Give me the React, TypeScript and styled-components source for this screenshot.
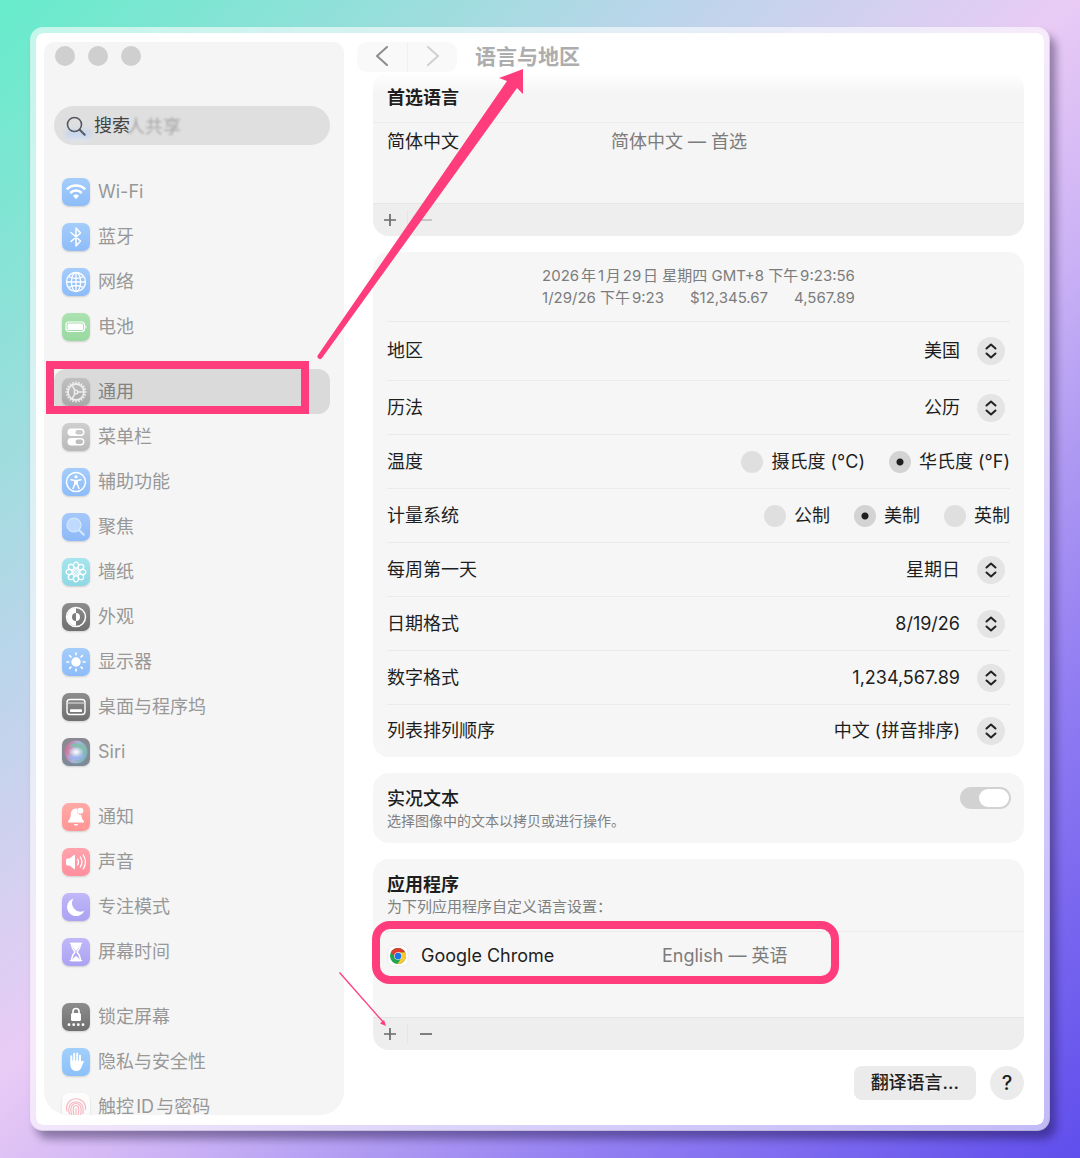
import React, { useState } from "react";
import styled, { createGlobalStyle, css } from "styled-components";
import { Fingerprint } from "lucide-react";

const PINK = "#ff3d7c";

const GlobalStyle = createGlobalStyle`
  *, *::before, *::after { box-sizing: border-box; }
  body {
    margin: 0;
    font-family: Inter, "Noto Sans CJK SC", sans-serif;
    font-size: 18px;
    line-height: 24px;
    color: #1e1e1e;
    text-autospace: normal;
  }
  button, input, select { font: inherit; color: inherit; margin: 0; }
  ul { list-style: none; margin: 0; padding: 0; }
  h1, h2, p { margin: 0; }
`;

/* ---------- window ---------- */

const Backdrop = styled.div`
  display: flex;
  min-height: 100vh;
  padding: 27px 30px;
  background: linear-gradient(
    135deg,
    #66eccb 0%,
    #92e0d9 16%,
    #b8d6e9 29%,
    #e9cbf5 48%,
    #c9b0f5 60%,
    #af9af2 68%,
    #937ff2 78%,
    #7b68ef 88%,
    #5f4eec 100%
  );
`;

const Window = styled.div`
  position: relative;
  display: flex;
  flex: 1;
  min-width: 0;
  padding: 9px 0 0 8px;
  border: 6px solid rgba(255, 255, 255, 0.6);
  border-radius: 13px;
  background: #fff;
  background-clip: padding-box;
  box-shadow: 6px 8px 9px rgba(20, 10, 50, 0.4);
`;

const ArrowLayer = styled.svg`
  position: absolute;
  top: 0;
  left: 0;
  width: 100%;
  height: 100%;
  pointer-events: none;
`;

const Highlight = styled.span<{ $round?: boolean }>`
  position: absolute;
  inset: ${(p) => (p.$round ? "-11px 185px 33px -1px" : "-8px 21px 0 -8px")};
  border: 8px solid ${PINK};
  border-radius: ${(p) => (p.$round ? "18px" : "0")};
  pointer-events: none;
`;

/* ---------- sidebar ---------- */

const Sidebar = styled.aside`
  contain: size;
  flex: none;
  width: 300px;
  margin-bottom: 10px;
  padding: 4px 14px 0 10px;
  border-radius: 10px 10px 24px 24px;
  background: #f5f5f5;
  overflow: hidden;
`;

const Lights = styled.div`
  display: flex;
  gap: 13px;
  padding-left: 1px;
`;

const Light = styled.button`
  width: 20px;
  height: 20px;
  padding: 0;
  border: 0;
  border-radius: 50%;
  background: #cfcfcf;
`;

const Search = styled.label`
  position: relative;
  display: flex;
  align-items: center;
  gap: 8px;
  height: 39px;
  margin: 40px 0 24px;
  padding: 0 12px;
  border-radius: 20px;
  background: #dfdfdf;
  svg { position: relative; flex: none; }
`;

const SearchInput = styled.input`
  position: relative;
  flex: 1;
  min-width: 0;
  padding: 0;
  border: 0;
  outline: 0;
  background: none;
  appearance: none;
  &::placeholder { color: #444; opacity: 1; }
`;

const Ghost = styled.span`
  position: absolute;
  top: 9px;
  left: 73px;
  color: #8e8e8e;
  filter: blur(1px);
  opacity: 0.7;
`;

const GhostIcon = styled.span`
  position: absolute;
  top: 10px;
  left: 12px;
  width: 25px;
  height: 26px;
  border-radius: 7px;
  background: linear-gradient(#dfdfdf 40%, #c3d3ee 70%, #e9e9e9);
  filter: blur(2px);
`;

const Groups = styled.nav`
  display: flex;
  flex-direction: column;
  gap: 20px;
`;

const Item = styled.a<{ $selected?: boolean }>`
  position: relative;
  display: flex;
  align-items: center;
  gap: 8px;
  height: 45px;
  padding-left: 8px;
  border-radius: 12px;
  color: #989898;
  text-decoration: none;
  ${(p) =>
    p.$selected &&
    css`
      background: #dadada;
      color: #828282;
    `}
`;

const Tile = styled.svg<{ $from: string; $to: string }>`
  flex: none;
  width: 28px;
  height: 28px;
  border-radius: 7px;
  background: linear-gradient(${(p) => p.$from}, ${(p) => p.$to});
  box-shadow: 0 1px 2px rgba(0, 0, 0, 0.16);
  fill: none;
  stroke: none;
`;

/* ---------- main pane ---------- */

const Pane = styled.main`
  flex: 1;
  min-width: 0;
  padding-bottom: 25px;
`;

const Toolbar = styled.header`
  display: flex;
  align-items: center;
  gap: 18px;
  height: 30px;
  padding-left: 13px;
`;

const NavPill = styled.div`
  display: flex;
  height: 30px;
  border-radius: 10px;
  background: #f9f9f9;
`;

const NavButton = styled.button`
  display: grid;
  place-items: center;
  width: 50px;
  padding: 0 0 2px;
  border: 0;
  background: none;
  color: #8d8d8d;
  & + & { border-left: 1px solid #f1f1f1; }
  &:disabled { color: #d0d0d0; }
`;

const Title = styled.h1`
  font-size: 21px;
  line-height: 30px;
  font-weight: 600;
  color: #adadad;
`;

const Sections = styled.div`
  display: flex;
  flex-direction: column;
  gap: 16px;
  padding: 0 20px 0 29px;
`;

const Card = styled.section<{ $fade?: boolean }>`
  border-radius: 16px;
  background: ${(p) => (p.$fade ? "linear-gradient(#fff, #f5f5f5 22px)" : "#f6f6f6")};
`;

const CardHead = styled.div<{ $tall?: boolean }>`
  height: ${(p) => (p.$tall ? "73px" : "51px")};
  padding: 14px 14px 0;
  border-bottom: 1px solid #ececec;
`;

const Heading = styled.h2<{ $bold?: boolean }>`
  font-size: 18px;
  line-height: 24px;
  font-weight: ${(p) => (p.$bold ? 600 : 500)};
`;

const Note = styled.p<{ $large?: boolean }>`
  font-size: ${(p) => (p.$large ? 15 : 14)}px;
  line-height: 20px;
  color: #808080;
`;

const LangList = styled.ul<{ $height: number }>`
  height: ${(p) => p.$height}px;
`;

const LangRow = styled.li<{ $name: number; $top: number }>`
  position: relative;
  display: grid;
  grid-template-columns: ${(p) => p.$name}px 1fr;
  align-content: start;
  align-items: center;
  height: 100%;
  padding: ${(p) => p.$top}px 14px 0;
`;

const LangName = styled.span`
  display: flex;
  align-items: center;
  gap: 12px;
`;

const LangValue = styled.span`
  color: #7c7c7c;
`;

const CardFoot = styled.div`
  display: flex;
  align-items: center;
  height: 33px;
  border-top: 1px solid #e5e5e5;
  border-radius: 0 0 16px 16px;
  background: #eee;
`;

const FootButton = styled.button`
  display: grid;
  place-items: center;
  width: 34px;
  height: 20px;
  padding: 0;
  border: 0;
  background: none;
  color: #6a6a6a;
  & + & { width: 36px; border-left: 1px solid #e6e6e6; }
  &:disabled { color: #bdbdbd; }
`;

const Preview = styled.div`
  display: grid;
  justify-content: center;
  align-content: center;
  height: 70px;
  margin: 0 14px;
  border-bottom: 1px solid #ebebeb;
  font-size: 15px;
  line-height: 22px;
  color: #7c7c7c;
`;

const PreviewLine = styled.div`
  display: flex;
  justify-content: space-between;
`;

const Row = styled.div<{ $first?: boolean }>`
  display: flex;
  align-items: center;
  justify-content: space-between;
  height: ${(p) => (p.$first ? 59 : 54)}px;
  margin: 0 14px;
  border-bottom: 1px solid #ebebeb;
  &:last-child { height: 52px; border-bottom: 0; }
`;

const Picker = styled.span`
  display: flex;
  align-items: center;
  gap: 17px;
  padding-right: 5px;
`;

const Select = styled.select`
  padding: 0;
  border: 0;
  outline: 0;
  background: none;
  appearance: none;
  text-align-last: right;
`;

const Chevrons = styled.svg`
  width: 28px;
  height: 28px;
  border-radius: 50%;
  background: #e4e4e4;
  fill: none;
  stroke: #222;
  stroke-width: 2;
  stroke-linecap: round;
  stroke-linejoin: round;
`;

const Radios = styled.div`
  display: flex;
  gap: 24px;
`;

const RadioLabel = styled.label`
  display: flex;
  align-items: center;
  gap: 8px;
`;

const Radio = styled.input`
  appearance: none;
  width: 22px;
  height: 22px;
  border-radius: 50%;
  background: #dfdfdf;
  &:checked { background: radial-gradient(circle, #1e1e1e 3px, #d3d3d3 4px); }
`;

const SwitchRow = styled.label`
  display: flex;
  align-items: flex-start;
  justify-content: space-between;
  height: 70px;
  padding: 14px 13px 0 14px;
`;

const Switch = styled.input`
  appearance: none;
  width: 51px;
  height: 22px;
  border-radius: 11px;
  background: #d2d2d2;
  &::before {
    content: "";
    display: block;
    width: 30px;
    height: 18px;
    margin: 2px;
    border-radius: 9px;
    background: #fff;
  }
  &:checked::before { margin-left: 19px; }
`;

const Actions = styled.div`
  display: flex;
  justify-content: flex-end;
  gap: 14px;
`;

const ActionButton = styled.button<{ $circle?: boolean }>`
  height: 34px;
  width: ${(p) => (p.$circle ? "34px" : "auto")};
  padding: ${(p) => (p.$circle ? "0" : "0 17px")};
  border: 0;
  border-radius: ${(p) => (p.$circle ? "50%" : "8px")};
  background: #ebebeb;
  font-weight: 500;
  ${(p) => p.$circle && css`font-size: 20px;`}
`;

/* ---------- icons ---------- */

const BLUE = ["#a5cdfb", "#8dbcf8"];
const GREY = ["#cfcfcf", "#b9b9b9"];
const DARK = ["#8d8d8d", "#6f6f6f"];
const RED = ["#ffaaa6", "#ff9594"];
const VIOLET = ["#c0b8f8", "#aba2f2"];
const angles = (n: number) => Array.from({ length: n }, (_, i) => (i * 360) / n);

type Entry = { name: string; tone: string[]; art: React.ReactNode };

const groups: Entry[][] = [
  [
    {
      name: "Wi-Fi",
      tone: BLUE,
      art: (
        <g stroke="#fff" strokeWidth="2.5">
          <path d="M4.800 11.400a13 13 0 0 1 18.400 0M8.300 15a8 8 0 0 1 11.400 0" />
          <path d="M14 21.200l-3-3.400a4.200 4.200 0 0 1 6 0z" fill="#fff" stroke="none" />
        </g>
      ),
    },
    {
      name: "蓝牙",
      tone: BLUE,
      art: <path d="M9 9.500l9.500 8.500-4.500 5v-18l4.500 5L9 18.500" stroke="#fff" strokeWidth="1.5" strokeLinejoin="round" strokeLinecap="round" />,
    },
    {
      name: "网络",
      tone: BLUE,
      art: (
        <g stroke="#fff" strokeWidth="1.3">
          <circle cx="14" cy="14" r="9.5" />
          <ellipse cx="14" cy="14" rx="4.600" ry="9.5" />
          <path d="M14 4.500v19M4.500 14h19M6.500 8.500q7.500 4 15 0M6.500 19.500q7.500-4 15 0" />
        </g>
      ),
    },
    {
      name: "电池",
      tone: ["#abe2b1", "#99d9a0"],
      art: (
        <g>
          <rect x="4" y="9" width="18.500" height="9.5" rx="3" stroke="#fff" strokeWidth="1.2" />
          <rect x="5.500" y="10.500" width="15.500" height="6.500" rx="1.5" fill="#fff" />
          <path d="M23.500 12q2 1.800 0 3.500z" fill="#fff" />
        </g>
      ),
    },
  ],
  [
    {
      name: "通用",
      tone: ["#c0c0c0", "#a8a8a8"],
      art: (
        <g stroke="#ededed" strokeWidth="1.5">
          <circle cx="14" cy="14" r="8" strokeWidth="1.8" />
          {angles(20).map((a) => (
            <path key={a} d="M14 5.500V3.500" transform={`rotate(${a} 14 14)`} />
          ))}
          {angles(3).map((a) => (
            <path key={a} d="M16 14h6" transform={`rotate(${a} 14 14)`} />
          ))}
          <circle cx="14" cy="14" r="1.8" />
        </g>
      ),
    },
    {
      name: "菜单栏",
      tone: GREY,
      art: (
        <g fill="#fff">
          <rect x="5.5" y="5.5" width="17" height="7.5" rx="3.7" />
          <rect x="5.5" y="15" width="17" height="7.5" rx="3.7" />
          <rect x="13.5" y="7" width="7.5" height="4.5" rx="2.2" fill="#c8c8c8" />
          <rect x="13.5" y="16.5" width="7.5" height="4.5" rx="2.2" fill="#bdbdbd" />
        </g>
      ),
    },
    {
      name: "辅助功能",
      tone: BLUE,
      art: (
        <g stroke="#fff" strokeWidth="1.5" strokeLinecap="round">
          <circle cx="14" cy="14" r="9.5" />
          <circle cx="14" cy="8.8" r="1.6" fill="#fff" stroke="none" />
          <path d="M9 11.700l3.800.8h2.400l3.800-.8M12.900 12.800v3.200l-1.900 4.500M15.100 12.800v3.200l1.900 4.500" />
          <path d="M12.300 12.400h3.400v4h-3.400z" fill="#fff" stroke="none" />
        </g>
      ),
    },
    {
      name: "聚焦",
      tone: ["#a5c8fb", "#8db9f8"],
      art: (
        <g stroke="#d7e8fe" strokeLinecap="round">
          <circle cx="12" cy="12" r="7" fill="#bfdafd" strokeWidth="1.2" />
          <path d="M17.300 17.300l4.500 4.500" strokeWidth="2" />
        </g>
      ),
    },
    {
      name: "墙纸",
      tone: ["#a6e5ee", "#8fd8e3"],
      art: (
        <g stroke="#fff" strokeWidth="1.3">
          {angles(8).map((a) => (
            <g key={a} transform={`rotate(${a} 14 14)`}>
              <ellipse cx="14" cy="7.2" rx="2.6" ry="3" />
              <path d="M14 14l-1-4h2z" fill="#fff" stroke="none" />
            </g>
          ))}
        </g>
      ),
    },
    {
      name: "外观",
      tone: DARK,
      art: (
        <g>
          <circle cx="14" cy="14" r="9.5" stroke="#fff" strokeWidth="1.5" />
          <path d="M14 5a9 9 0 0 0 0 18v-5a4 4 0 0 1 0-8z" fill="#fff" />
          <path d="M14 10a4 4 0 0 1 0 8z" fill="#fff" />
        </g>
      ),
    },
    {
      name: "显示器",
      tone: BLUE,
      art: (
        <g stroke="#fff" strokeWidth="1.6" strokeLinecap="round">
          <circle cx="14" cy="14" r="4.7" fill="#fff" stroke="none" />
          {angles(8).map((a) => (
            <path key={a} d="M14 6.800V5" transform={`rotate(${a} 14 14)`} />
          ))}
        </g>
      ),
    },
    {
      name: "桌面与程序坞",
      tone: DARK,
      art: (
        <g>
          <rect x="5" y="6.5" width="18" height="15" rx="3" stroke="#fff" strokeWidth="1.4" />
          <path d="M6 10h16" stroke="#fff" strokeWidth=".8" />
          <rect x="8" y="16.3" width="12" height="2.7" rx=".8" fill="#fff" />
        </g>
      ),
    },
    {
      name: "Siri",
      tone: ["#8a8a90", "#7d8a98"],
      art: (
        <g>
          <defs>
            <linearGradient id="siri" x1="0" y1=".3" x2="1" y2=".6">
              <stop offset="0" stopColor="#d4688f" />
              <stop offset=".5" stopColor="#a9b4dc" />
              <stop offset="1" stopColor="#74b5ae" />
            </linearGradient>
            <radialGradient id="siriGlow">
              <stop offset="0" stopColor="#fff" />
              <stop offset="1" stopColor="#fff" stopOpacity="0" />
            </radialGradient>
          </defs>
          <circle cx="14" cy="14" r="11.5" fill="url(#siri)" />
          <path d="M7 8a10 10 0 0 1 17 7q-6-5-17-7z" fill="#7fc0a8" opacity=".8" />
          <path d="M5 17q9 2 18-1a10 10 0 0 1-18 1z" fill="#9db4f3" opacity=".8" />
          <ellipse cx="14" cy="14" rx="8" ry="5.5" fill="url(#siriGlow)" />
        </g>
      ),
    },
  ],
  [
    {
      name: "通知",
      tone: RED,
      art: (
        <g fill="#fff">
          <path d="M14 5.500c-3.500 0-5 2.500-5.200 5.500-.2 4-1 5-2.800 7.300-.3.600 0 1.200.7 1.200h14.600c.7 0 1-.6.700-1.200-1.500-2-2.400-3-2.700-6.300a4.200 4.200 0 0 1-3.700-6.200z" />
          <path d="M11.800 21h4.400a2.300 2.300 0 0 1-4.400 0z" />
          <circle cx="18.3" cy="7.7" r="3" />
        </g>
      ),
    },
    {
      name: "声音",
      tone: ["#ffa3ad", "#ff8f9d"],
      art: (
        <g>
          <path d="M4 12q0-1.500 1.500-1.500h2L12 7q1-.6 1 .6v12.800q0 1.200-1 .6l-4.500-3.500h-2Q4 17.500 4 16z" fill="#fff" />
          <path d="M15.500 11q2 3 0 6M18.300 9q3.300 5 0 10M21.200 7q4.500 7 0 14" stroke="#fff" strokeWidth="1.3" strokeLinecap="round" />
        </g>
      ),
    },
    {
      name: "专注模式",
      tone: VIOLET,
      art: <path d="M11.500 5.500a9 9 0 1 0 10.800 12.300A8.500 8.500 0 0 1 11.500 5.500z" fill="#fff" />,
    },
    {
      name: "屏幕时间",
      tone: VIOLET,
      art: (
        <g stroke="#fff" strokeWidth="1.3" strokeLinejoin="round">
          <path d="M8.500 5.500h11M8.500 22.500h11" strokeWidth="1.6" strokeLinecap="round" />
          <path d="M9.500 5.500h9q0 4.500-3.500 8.500 3.500 4 3.500 8.500h-9q0-4.500 3.500-8.500-3.500-4-3.500-8.500z" />
          <path d="M10 6h8q0 3-4 7-4-4-4-7zM10.500 22q.5-2.500 3.500-4 3 1.500 3.500 4z" fill="#fff" stroke="none" />
        </g>
      ),
    },
  ],
  [
    {
      name: "锁定屏幕",
      tone: DARK,
      art: (
        <g fill="#fff">
          <rect x="9" y="10" width="10" height="8" rx="1.5" />
          <path d="M11 11V8.500a3 3 0 0 1 6 0V11" fill="none" stroke="#fff" strokeWidth="1.7" />
          {[7, 11.7, 16.3, 21].map((x) => (
            <circle key={x} cx={x} cy="21.7" r="1.4" />
          ))}
        </g>
      ),
    },
    {
      name: "隐私与安全性",
      tone: ["#a2d0fb", "#8bc0f9"],
      art: (
        <g stroke="#fff" strokeWidth="2" strokeLinecap="round">
          <path d="M9.300 14V8.300M12.200 13V5.800M15.200 13V5.500M18 14V7.800M18.500 18l2.300-4.300" />
          <path d="M8.300 12.500h10.700l1.500 2.500c-.5 4.500-2.200 8-6.200 8s-6-3-6-7z" fill="#fff" stroke="none" />
        </g>
      ),
    },
    {
      name: "触控ID与密码",
      tone: ["#fdfdfd", "#f9f9f9"],
      art: (
        <g stroke="#f7b3bf" strokeWidth="1.1" strokeLinecap="round">
          <path d="M5 18a9.500 9.500 0 1 1 18.500-1.500M7.500 21a11 11 0 0 1-.5-6.500 7.200 7.200 0 0 1 14 0v6" />
          <path d="M10 22.500a14 14 0 0 1-1-7 5 5 0 0 1 10 0 20 20 0 0 1-.5 7M12.500 23.500a18 18 0 0 1-1.200-8 2.700 2.700 0 0 1 5.400 0q0 4-.7 8.200M14 15.500v8.500" />
        </g>
      ),
    },
  ],
];

const Chrome = () => (
  <svg width="22" height="22" viewBox="0 0 22 22" aria-hidden="true">
    <rect x="1" y="1" width="20" height="20" rx="5" fill="#fff" stroke="#e2e2e2" strokeWidth=".6" />
    <g transform="translate(1.400 1.400) scale(.8)">
      <circle cx="12" cy="12" r="10" fill="#22a455" />
      <path d="M12 7.300h8.900A10 10 0 0 1 11.500 22L16 14.400 12 12z" fill="#fcc934" />
      <path d="M20.900 7.300A10 10 0 0 0 3.400 6.900L8 14.400 12 12V7.300z" fill="#e23b2e" />
      <circle cx="12" cy="12" r="4.8" fill="#fff" />
      <circle cx="12" cy="12" r="4.2" fill="#1f73e8" />
    </g>
  </svg>
);

const Plus = () => (
  <svg width="14" height="14" viewBox="0 0 14 14" stroke="currentColor" strokeWidth="1.7" aria-hidden="true">
    <path d="M1 7h12M7 1v12" />
  </svg>
);

const Minus = () => (
  <svg width="14" height="14" viewBox="0 0 14 14" stroke="currentColor" strokeWidth="1.7" aria-hidden="true">
    <path d="M1 7h12" />
  </svg>
);

/* ---------- composed parts ---------- */

const PickerRow = ({ id, label, value, first }: { id: string; label: string; value: string; first?: boolean }) => (
  <Row $first={first}>
    <label htmlFor={id}>{label}</label>
    <Picker>
      <Select id={id} defaultValue={value}>
        <option>{value}</option>
      </Select>
      <Chevrons viewBox="0 0 28 28" aria-hidden="true">
        <path d="M9.500 11.500L14 7.500l4.500 4M9.500 16.500l4.500 4 4.500-4" />
      </Chevrons>
    </Picker>
  </Row>
);

const RadioRow = ({ name, label, options, initial }: { name: string; label: string; options: string[]; initial: string }) => {
  const [value, setValue] = useState(initial);
  return (
    <Row>
      <span id={name}>{label}</span>
      <Radios role="radiogroup" aria-labelledby={name}>
        {options.map((o) => (
          <RadioLabel key={o}>
            <Radio type="radio" name={name} checked={value === o} onChange={() => setValue(o)} />
            {o}
          </RadioLabel>
        ))}
      </Radios>
    </Row>
  );
};

const FootBar = ({ canRemove }: { canRemove: boolean }) => (
  <CardFoot>
    <FootButton aria-label="添加"><Plus /></FootButton>
    <FootButton aria-label="移除" disabled={!canRemove}><Minus /></FootButton>
  </CardFoot>
);

export default function App() {
  return (
    <>
      <GlobalStyle />
      <Backdrop>
        <Window>
          <Sidebar>
            <Lights>
              <Light aria-label="关闭" />
              <Light aria-label="最小化" />
              <Light aria-label="缩放" />
            </Lights>
            <Search>
              <GhostIcon />
              <Ghost aria-hidden="true">人共享</Ghost>
              <svg width="20" height="20" viewBox="0 0 20 20" fill="none" stroke="#54585f" strokeWidth="1.6" strokeLinecap="round" aria-hidden="true">
                <circle cx="8.5" cy="8.5" r="7" />
                <path d="M13.700 13.700l5 5" strokeWidth="2" />
              </svg>
              <SearchInput type="search" placeholder="搜索" aria-label="搜索" />
            </Search>
            <Groups>
              {groups.map((group, i) => (
                <ul key={i}>
                  {group.map(({ name, tone, art }) => (
                    <li key={name}>
                      <Item href="#" $selected={name === "通用"}>
                        <Tile viewBox="0 0 28 28" $from={tone[0]} $to={tone[1]} aria-hidden="true">
                          {art}
                        </Tile>
                        {name}
                        {name === "通用" && <Highlight />}
                      </Item>
                    </li>
                  ))}
                </ul>
              ))}
            </Groups>
          </Sidebar>

          <Pane>
            <Toolbar>
              <NavPill>
                <NavButton aria-label="后退">
                  <svg width="12" height="20" viewBox="0 0 12 20" fill="none" stroke="currentColor" strokeWidth="2" strokeLinecap="round" strokeLinejoin="round">
                    <path d="M11 1L1 10l10 9" />
                  </svg>
                </NavButton>
                <NavButton aria-label="前进" disabled>
                  <svg width="12" height="20" viewBox="0 0 12 20" fill="none" stroke="currentColor" strokeWidth="2" strokeLinecap="round" strokeLinejoin="round">
                    <path d="M1 1l10 9-10 9" />
                  </svg>
                </NavButton>
              </NavPill>
              <Title>语言与地区</Title>
            </Toolbar>

            <Sections>
              <Card $fade>
                <CardHead>
                  <Heading $bold>首选语言</Heading>
                </CardHead>
                <LangList $height={80}>
                  <LangRow $name={224} $top={7}>
                    <LangName>简体中文</LangName>
                    <LangValue>简体中文 — 首选</LangValue>
                  </LangRow>
                </LangList>
                <FootBar canRemove={false} />
              </Card>

              <Card>
                <Preview>
                  <PreviewLine>2026年1月29日 星期四 GMT+8 下午9:23:56</PreviewLine>
                  <PreviewLine>
                    <span>1/29/26 下午9:23</span>
                    <span>$12,345.67</span>
                    <span>4,567.89</span>
                  </PreviewLine>
                </Preview>
                <PickerRow id="region" label="地区" value="美国" first />
                <PickerRow id="calendar" label="历法" value="公历" />
                <RadioRow name="temperature" label="温度" options={["摄氏度 (°C)", "华氏度 (°F)"]} initial="华氏度 (°F)" />
                <RadioRow name="units" label="计量系统" options={["公制", "美制", "英制"]} initial="美制" />
                <PickerRow id="weekday" label="每周第一天" value="星期日" />
                <PickerRow id="date" label="日期格式" value="8/19/26" />
                <PickerRow id="number" label="数字格式" value="1,234,567.89" />
                <PickerRow id="sort" label="列表排列顺序" value="中文 (拼音排序)" />
              </Card>

              <Card>
                <SwitchRow>
                  <div>
                    <Heading>实况文本</Heading>
                    <Note>选择图像中的文本以拷贝或进行操作。</Note>
                  </div>
                  <Switch type="checkbox" role="switch" defaultChecked />
                </SwitchRow>
              </Card>

              <Card>
                <CardHead $tall>
                  <Heading $bold>应用程序</Heading>
                  <Note $large>为下列应用程序自定义语言设置：</Note>
                </CardHead>
                <LangList $height={85}>
                  <LangRow $name={275} $top={12}>
                    <LangName>
                      <Chrome />
                      Google Chrome
                    </LangName>
                    <LangValue>English — 英语</LangValue>
                    <Highlight $round />
                  </LangRow>
                </LangList>
                <FootBar canRemove />
              </Card>

              <Actions>
                <ActionButton>翻译语言...</ActionButton>
                <ActionButton $circle aria-label="帮助">?</ActionButton>
              </Actions>
            </Sections>
          </Pane>

          <ArrowLayer aria-hidden="true">
            <path d="M282 322L471 48l-8-3 24-9v25l-6-6-195 270a2.500 2.500 0 0 1-4-3z" fill={PINK} />
            <path d="M303.500 939.500L348 990" stroke={PINK} strokeWidth="1.3" />
            <path d="M350 993l-6-2.500 4-3.500z" fill={PINK} />
          </ArrowLayer>
        </Window>
      </Backdrop>
    </>
  );
}
